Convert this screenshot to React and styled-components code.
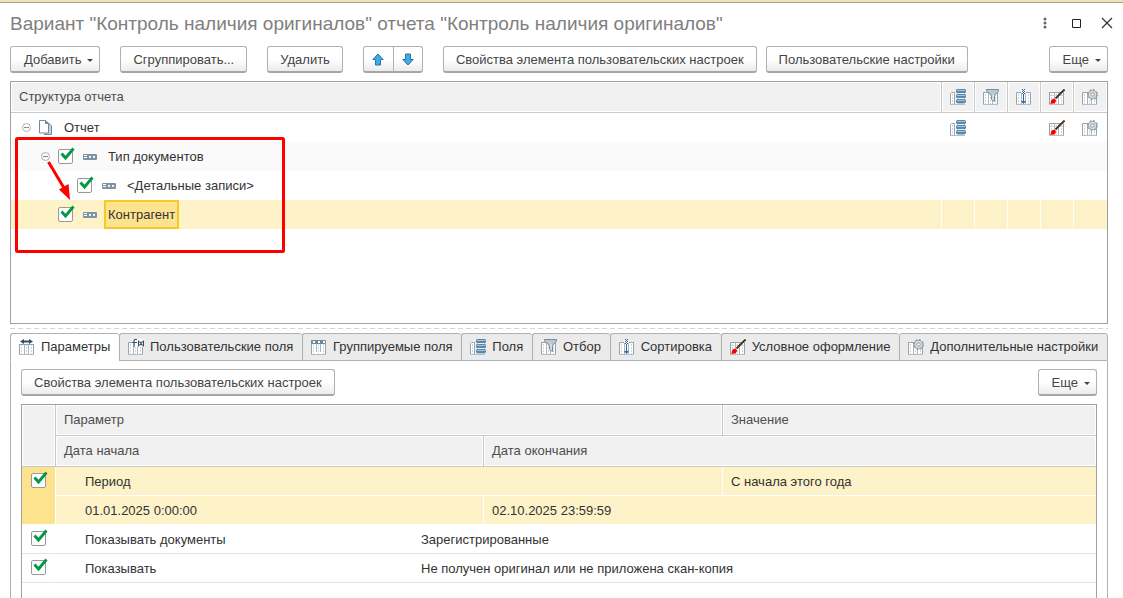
import React from 'react';
import styled, { createGlobalStyle } from 'styled-components';

const GlobalStyle = createGlobalStyle`
  * {
    box-sizing: border-box;
  }
  body {
    margin: 0;
    background: #fff;
    color: #333;
    font-family: "Liberation Sans", Arial, sans-serif;
    font-size: 13px;
    line-height: 16px;
  }
  button, input {
    font: inherit;
    color: inherit;
  }
`;

const StyledWindow = styled.div`
  display: flex;
  flex-direction: column;
  height: 100vh;
  overflow: hidden;
  padding: 0 15px 0 10px;
  border-top: 2px solid #f0e3b0;
  box-shadow: inset 0 1px #a0a0a0;
`;

const StyledTitleBar = styled.header`
  display: flex;
  align-items: center;
  flex: none;
  height: 44px;
`;

const StyledTitle = styled.h1`
  flex: 1;
  margin: 0;
  font-size: 19px;
  line-height: 24px;
  font-weight: 400;
  color: #808080;
  white-space: nowrap;
`;

const StyledWindowControls = styled.div`
  display: flex;
  gap: 15px;
  margin-right: -7px;
  padding-bottom: 2px;
`;

const StyledWindowButton = styled.button`
  display: flex;
  padding: 0;
  border: 0;
  background: none;
`;

const StyledToolbar = styled.div`
  display: flex;
  align-items: center;
  flex: none;
  gap: ${({ $gap }) => $gap || 0}px;
`;

const StyledGroup = styled.div`
  display: flex;
  gap: 20px;
`;

const StyledSpacer = styled.div`
  flex: 1;
`;

const StyledButton = styled.button`
  display: flex;
  align-items: center;
  justify-content: center;
  height: 27px;
  padding: ${({ $menu }) => ($menu ? '2px 6px 0 13px' : '2px 12px 0')};
  gap: 6px;
  border: 1px solid #b0b0b0;
  border-bottom: 2px solid #a6a6a6;
  border-radius: 3px;
  background: linear-gradient(#fff 50%, #ececec);
  color: #444;
  white-space: nowrap;
`;

const StyledArrowPair = styled.div`
  display: flex;

  button {
    width: 31px;
    padding: 0;
  }
  button:first-child {
    border-radius: 3px 0 0 3px;
  }
  button:last-child {
    width: 30px;
    margin-left: -1px;
    border-radius: 0 3px 3px 0;
  }
`;

const StyledCaret = styled.span`
  border: 3px solid transparent;
  border-top-color: #444;
  border-bottom: 0;
`;

const StyledFrame = styled.section`
  position: relative;
  flex: none;
  min-height: 243px;
  margin-top: 8px;
  border: 1px solid #a0a0a0;
`;

const StyledTable = styled.table`
  width: 100%;
  table-layout: fixed;
  border-collapse: separate;
  border-spacing: 0;

  th, td {
    padding: 0;
    text-align: left;
    font-weight: 400;
    white-space: nowrap;
  }
`;

const StyledHead = styled.th`
  height: 31px;
  color: #4d4d4d;
  background: #f1f1f1;
  border-bottom: 1px solid #c8c8c8;
  border-right: ${({ $last }) => ($last ? '0' : '1px solid #c8c8c8')};
  box-shadow: inset 0 0 0 1px #fff;

  && {
    padding: 0 8px;
  }
  > svg {
    display: block;
  }
`;

const StyledTreeRow = styled.tr`
  background: ${({ $selected, $striped }) =>
    $selected ? '#fdf2c8' : $striped ? '#fafafa' : '#fff'};

  td {
    height: 29px;
    border-right: ${({ $selected }) => ($selected ? '1px solid #fff' : '1px solid transparent')};
  }
  td:last-child {
    border-right: 0;
  }
  td > svg {
    display: block;
    margin-left: 8px;
  }
`;

const StyledNode = styled.div`
  display: flex;
  align-items: center;
  height: 29px;
  padding-left: ${({ $level }) => 6 + $level * 19}px;
`;

const StyledExpander = styled.span`
  display: flex;
  justify-content: center;
  width: 19px;
  margin-right: 3px;
`;

const StyledNodeIcon = styled.span`
  display: flex;
  width: 14px;
  margin-right: 7px;
`;

const StyledNodeLabel = styled.span`
  padding: 5px 2px 4px;
  border: 2px solid ${({ $selected }) => ($selected ? '#f6c926' : 'transparent')};
  background: ${({ $selected }) => ($selected ? '#fee38f' : 'none')};
`;

const StyledCheck = styled.span`
  position: relative;
  display: block;
  width: 15px;
  height: 15px;
  margin-right: ${({ $spaced }) => ($spaced ? '10px' : '0')};

  input {
    display: block;
    appearance: none;
    width: 15px;
    height: 15px;
    margin: 0;
    border: 1px solid #999;
    border-radius: 2px;
    background: #fff;
  }
  svg {
    position: absolute;
    left: 2px;
    top: -2px;
    pointer-events: none;
    visibility: hidden;
  }
  input:checked + svg {
    visibility: visible;
  }
`;

const StyledMark = styled.svg`
  position: absolute;
  left: 4px;
  top: 55px;
  pointer-events: none;
`;

const StyledSplitter = styled.div`
  flex: none;
  height: 1px;
  margin: 4px 0;
  background: repeating-linear-gradient(90deg, #d4d4d4 0 5px, transparent 5px 8px);
`;

const StyledTabs = styled.div`
  display: flex;
  flex: none;
`;

const StyledTab = styled.button`
  display: flex;
  align-items: center;
  flex: 1 0 auto;
  gap: 6px;
  height: 28px;
  padding: 0 8px;
  border: 1px solid #b0b0b0;
  border-right-width: 0;
  border-bottom-color: ${({ $active }) => ($active ? '#fff' : '#b0b0b0')};
  border-radius: 3px 3px 0 0;
  background: ${({ $active }) => ($active ? '#fff' : '#ebebeb')};
  white-space: nowrap;

  &:last-child {
    border-right-width: 1px;
  }
`;

const StyledPanel = styled.section`
  display: flex;
  flex-direction: column;
  flex: 1;
  min-height: 0;
  padding: 8px 10px 0;
  border: solid #b0b0b0;
  border-width: 0 1px;
`;

const StyledParams = styled.div`
  flex: 1;
  margin-top: 8px;
  border: solid #a0a0a0;
  border-width: 1px 1px 0;
`;

const StyledParamRow = styled.tr`
  background: ${({ $selected }) => ($selected ? '#fdf2c8' : '#fff')};

  td {
    height: 29px;
    border-bottom: 1px solid ${({ $selected }) => ($selected ? '#fff' : '#e4e4e4')};
  }
`;

const StyledParamCell = styled.td`
  && {
    padding: 2px 0 0 ${({ $indent }) => ($indent ? '29px' : '8px')};
  }
  border-right: ${({ $line }) => ($line ? '1px solid #fff' : '0')};
`;

const StyledCheckCell = styled.td`
  && {
    padding: 6px 0 0 9px;
  }
  vertical-align: top;
  border-right: 1px solid #fff;
  background: ${({ $selected }) => ($selected ? '#fee38f' : 'none')};
`;

const Sheet = ({ children, top = 3 }) => (
  <svg width="16" height="16" viewBox="0 0 16 16" fill="none">
    <path d={`M.5 15V${top + 0.5}h14V15`} fill="#fff" stroke="#93a3af" />
    <path d={`M5.5 ${top}v12M9.5 ${top}v12`} stroke="#a9b6c0" />
    <path d="M2.5 5v10M7.5 5v10M12.5 5v10" stroke="#ccd5dc" strokeDasharray="2 1" />
    <path d="M0 15.5h15" stroke="#b3bec7" />
    {children}
  </svg>
);

const FieldsIcon = () => (
  <svg width="16" height="16" viewBox="0 0 16 16" fill="none">
    <path d="M.5 15V4.5l1-1h3V15" fill="#fff" stroke="#93a3af" />
    <path d="M2.5 5v10" stroke="#ccd5dc" strokeDasharray="2 1" />
    <path d="M0 15.5h15" stroke="#b3bec7" />
    <path d="M7.5 3.5h7v11h-7z" fill="#eef3f6" stroke="#b5c8d5" />
    {[0, 5, 10].map((y) => (
      <g key={y}>
        <rect x="6" y={y} width="10" height="4" rx="1.5" fill="#5c87a8" />
        <path d={`M7 ${y + 1.5}h8`} stroke="#a3c4da" />
      </g>
    ))}
  </svg>
);

const FilterIcon = () => (
  <Sheet>
    <path d="M3.5.5h12V2l-4 4.5v6l-3-2v-4L3.5 2z" fill="#bcc6cd" stroke="#7b8b97" />
    <path d="M10 5v6" stroke="#eef2f4" />
  </Sheet>
);

const SortIcon = () => (
  <Sheet>
    <path d="M5 2h5v13H5z" fill="#fff" />
    <path d="M5.5 4v11M9.5 4v11" stroke="#a9b6c0" />
    <path d="M7.5 5v8" stroke="#2f659b" />
    <path d="M5 12h5l-2.5 3z" fill="#2f659b" />
    <path d="M6 .5h1m1 0h1M7 1.5h1M6 2.5h1m1 0h1M7 3.5h1M6 4.5h1m1 0h1" stroke="#2f659b" />
  </Sheet>
);

const BrushIcon = () => (
  <Sheet>
    <path d="M1 6.5h13" stroke="#ccd5dc" />
    <path d="M15.5.5 6.5 9.5" stroke="#4d2c16" strokeWidth="1.8" />
    <path d="M1 14.5c1.2-.8.6-3.2 2-4.3 1.3-1 3.6-.5 4 1.3.2 2.500-2.700 3.900-6 3z" fill="#f00" />
  </Sheet>
);

const GearIcon = () => (
  <Sheet>
    <circle cx="10.5" cy="5.5" r="4.2" fill="#d9dde0" stroke="#98a1a8" />
    <circle cx="10.5" cy="5.5" r="5" stroke="#8b949b" strokeDasharray="2 1.93" />
    <circle cx="10.5" cy="5.5" r="1.7" fill="#fff" stroke="#8b949b" />
  </Sheet>
);

const ParamsIcon = () => (
  <Sheet top={4}>
    <path d="M0 0h16v5H0z" fill="#fff" />
    <path d="M3 2.5h9" stroke="#32505f" strokeWidth="2" />
    <path d="M1 2.5 5 0v5zM14 2.5 10 0v5z" fill="#32505f" />
    <path d="M0 5.5h15" stroke="#93a3af" />
  </Sheet>
);

const FunctionIcon = () => (
  <Sheet>
    <path d="M5 0h11v8H5z" fill="#fff" />
    <path
      d="M9 .5H7.500Q6 .5 6 2v6M4.500 3.500H9M10.500 1.500v6M15.500 1.500v6M11.500 2.500l3 4M14.500 2.500l-3 4"
      stroke="#32505f"
      strokeWidth="1.2"
    />
  </Sheet>
);

const GroupIcon = () => (
  <Sheet top={1}>
    <rect x=".5" y="1.5" width="14" height="3" rx="1" fill="#6b889d" stroke="#6b889d" />
    <path d="M2 3h2M7 3h2M12 3h2" stroke="#fff" strokeWidth="2" />
  </Sheet>
);

const RecordIcon = () => (
  <svg width="14" height="6" viewBox="0 0 14 6" fill="none">
    <rect width="14" height="6" rx="1" fill="#8093a2" />
    <path d="M1 1.500h3M1 3.500h3M6 2.500h2M10 2.500h2" stroke="#fff" />
    <path d="M6 3.500h2M10 3.500h2" stroke="#e3e9ed" />
  </svg>
);

const DocumentsIcon = () => (
  <svg width="14" height="15" viewBox="0 0 14 15" fill="none" stroke="#71899b">
    <path d="M8 2.5h1L12.500 6v8.500H5" fill="#c7d2da" />
    <path d="M.5.5h6l3 3V13h-9z" fill="#fff" />
    <path d="M6.500.5v3h3z" fill="#71899b" />
  </svg>
);

const MinusIcon = () => (
  <svg width="9" height="9" viewBox="0 0 9 9" fill="none" stroke="#b0b0b0">
    <circle cx="4.5" cy="4.5" r="4" />
    <path d="M2 4.5h5" stroke="#8c8c8c" />
  </svg>
);

const ArrowIcon = ({ down }) => (
  <svg width="12" height="13" viewBox="0 0 12 13">
    <path
      d={down ? 'M6 12 .8 6.5h2.700V1h5v5.500h2.700z' : 'M6 1 .8 6.5h2.700V12h5V6.500h2.700z'}
      fill="#41a9ea"
      stroke="#2f74a5"
      strokeLinejoin="round"
    />
  </svg>
);

const CheckBox = ({ label, spaced }) => (
  <StyledCheck $spaced={spaced}>
    <input type="checkbox" defaultChecked aria-label={label} />
    <svg width="15" height="14" viewBox="0 0 15 14" fill="none">
      <path d="M1.500 6.500 5.500 11 13.500 1.500" stroke="#009846" strokeWidth="2.8" />
    </svg>
  </StyledCheck>
);

const MoreButton = () => (
  <StyledButton $menu>
    Еще <StyledCaret />
  </StyledButton>
);

const columns = [
  { key: 'fields', title: 'Поля', Icon: FieldsIcon },
  { key: 'filter', title: 'Отбор', Icon: FilterIcon },
  { key: 'sort', title: 'Сортировка', Icon: SortIcon },
  { key: 'style', title: 'Условное оформление', Icon: BrushIcon },
  { key: 'extra', title: 'Дополнительные настройки', Icon: GearIcon },
];

const nodes = [
  { title: 'Отчет', level: 0, open: true, root: true, used: ['fields', 'style', 'extra'] },
  { title: 'Тип документов', level: 1, open: true, used: [] },
  { title: '<Детальные записи>', level: 2, used: [] },
  { title: 'Контрагент', level: 1, selected: true, used: [] },
];

const tabs = [
  { title: 'Параметры', Icon: ParamsIcon },
  { title: 'Пользовательские поля', Icon: FunctionIcon },
  { title: 'Группируемые поля', Icon: GroupIcon },
  ...columns,
];

const params = [
  { title: 'Показывать документы', value: 'Зарегистрированные' },
  { title: 'Показывать', value: 'Не получен оригинал или не приложена скан-копия' },
];

const StructureTable = () => (
  <StyledFrame>
    <StyledTable>
      <colgroup>
        <col />
        {columns.map(({ key }) => (
          <col key={key} width="33" />
        ))}
      </colgroup>
      <thead>
        <tr>
          <StyledHead>Структура отчета</StyledHead>
          {columns.map(({ key, title, Icon }, index) => (
            <StyledHead key={key} aria-label={title} $last={index === columns.length - 1}>
              <Icon />
            </StyledHead>
          ))}
        </tr>
      </thead>
      <tbody>
        {nodes.map(({ title, level, open, root, selected, used }, index) => (
          <StyledTreeRow key={title} $selected={selected} $striped={index % 2 === 1}>
            <td>
              <StyledNode $level={level}>
                <StyledExpander>{open && <MinusIcon />}</StyledExpander>
                {!root && <CheckBox label={title} spaced />}
                <StyledNodeIcon>{root ? <DocumentsIcon /> : <RecordIcon />}</StyledNodeIcon>
                <StyledNodeLabel $selected={selected}>{title}</StyledNodeLabel>
              </StyledNode>
            </td>
            {columns.map(({ key, Icon }) => (
              <td key={key}>{used.includes(key) && <Icon />}</td>
            ))}
          </StyledTreeRow>
        ))}
      </tbody>
    </StyledTable>
    <StyledMark width="270" height="116" viewBox="0 0 270 116" fill="none">
      <rect x="1.5" y="1.5" width="267" height="113" rx="1" stroke="#f00" strokeWidth="3" />
      <path d="M33.5 25 49 51" stroke="#f00" strokeWidth="3" />
      <path d="M55 63 44 52.500 53.500 47z" fill="#f00" />
    </StyledMark>
  </StyledFrame>
);

const ParamsTable = () => (
  <StyledParams>
    <StyledTable>
      <colgroup>
        <col width="34" />
        <col width="357" />
        <col width="71" />
        <col width="239" />
        <col />
      </colgroup>
      <thead>
        <tr>
          <StyledHead rowSpan={2} aria-label="Использование" />
          <StyledHead colSpan={3}>Параметр</StyledHead>
          <StyledHead $last>Значение</StyledHead>
        </tr>
        <tr>
          <StyledHead colSpan={2}>Дата начала</StyledHead>
          <StyledHead colSpan={2} $last>
            Дата окончания
          </StyledHead>
        </tr>
      </thead>
      <tbody>
        <StyledParamRow $selected>
          <StyledCheckCell rowSpan={2} $selected>
            <CheckBox label="Период" />
          </StyledCheckCell>
          <StyledParamCell colSpan={3} $indent $line>
            Период
          </StyledParamCell>
          <StyledParamCell>С начала этого года</StyledParamCell>
        </StyledParamRow>
        <StyledParamRow $selected>
          <StyledParamCell colSpan={2} $indent $line>
            01.01.2025 0:00:00
          </StyledParamCell>
          <StyledParamCell colSpan={2}>02.10.2025 23:59:59</StyledParamCell>
        </StyledParamRow>
        {params.map(({ title, value }) => (
          <StyledParamRow key={title}>
            <StyledCheckCell>
              <CheckBox label={title} />
            </StyledCheckCell>
            <StyledParamCell $indent>{title}</StyledParamCell>
            <StyledParamCell colSpan={3}>{value}</StyledParamCell>
          </StyledParamRow>
        ))}
      </tbody>
    </StyledTable>
  </StyledParams>
);

const App = () => (
  <>
    <GlobalStyle />
    <StyledWindow>
      <StyledTitleBar>
        <StyledTitle>
          Вариант "Контроль наличия оригиналов" отчета "Контроль наличия оригиналов"
        </StyledTitle>
        <StyledWindowControls>
          <StyledWindowButton aria-label="Меню">
            <svg width="16" height="16" fill="#666">
              <circle cx="8" cy="4" r="1.5" />
              <circle cx="8" cy="8" r="1.5" />
              <circle cx="8" cy="12" r="1.5" />
            </svg>
          </StyledWindowButton>
          <StyledWindowButton aria-label="Развернуть">
            <svg width="16" height="16" fill="none" stroke="#222">
              <path d="M4.500 4.500h8v8h-8z" />
            </svg>
          </StyledWindowButton>
          <StyledWindowButton aria-label="Закрыть">
            <svg width="16" height="16" fill="none" stroke="#333" strokeWidth="1.2">
              <path d="m3 3 10 10M13 3 3 13" />
            </svg>
          </StyledWindowButton>
        </StyledWindowControls>
      </StyledTitleBar>
      <StyledToolbar $gap={9}>
        <StyledGroup>
          <StyledButton $menu>
            Добавить <StyledCaret />
          </StyledButton>
          <StyledButton>Сгруппировать...</StyledButton>
          <StyledButton>Удалить</StyledButton>
          <StyledArrowPair>
            <StyledButton aria-label="Вверх">
              <ArrowIcon />
            </StyledButton>
            <StyledButton aria-label="Вниз">
              <ArrowIcon down />
            </StyledButton>
          </StyledArrowPair>
          <StyledButton>Свойства элемента пользовательских настроек</StyledButton>
        </StyledGroup>
        <StyledButton>Пользовательские настройки</StyledButton>
        <StyledSpacer />
        <MoreButton />
      </StyledToolbar>
      <StructureTable />
      <StyledSplitter />
      <StyledTabs role="tablist">
        {tabs.map(({ title, Icon }, index) => (
          <StyledTab key={title} role="tab" aria-selected={index === 0} $active={index === 0}>
            <Icon />
            {title}
          </StyledTab>
        ))}
      </StyledTabs>
      <StyledPanel>
        <StyledToolbar>
          <StyledButton>Свойства элемента пользовательских настроек</StyledButton>
          <StyledSpacer />
          <MoreButton />
        </StyledToolbar>
        <ParamsTable />
      </StyledPanel>
    </StyledWindow>
  </>
);

export default App;
